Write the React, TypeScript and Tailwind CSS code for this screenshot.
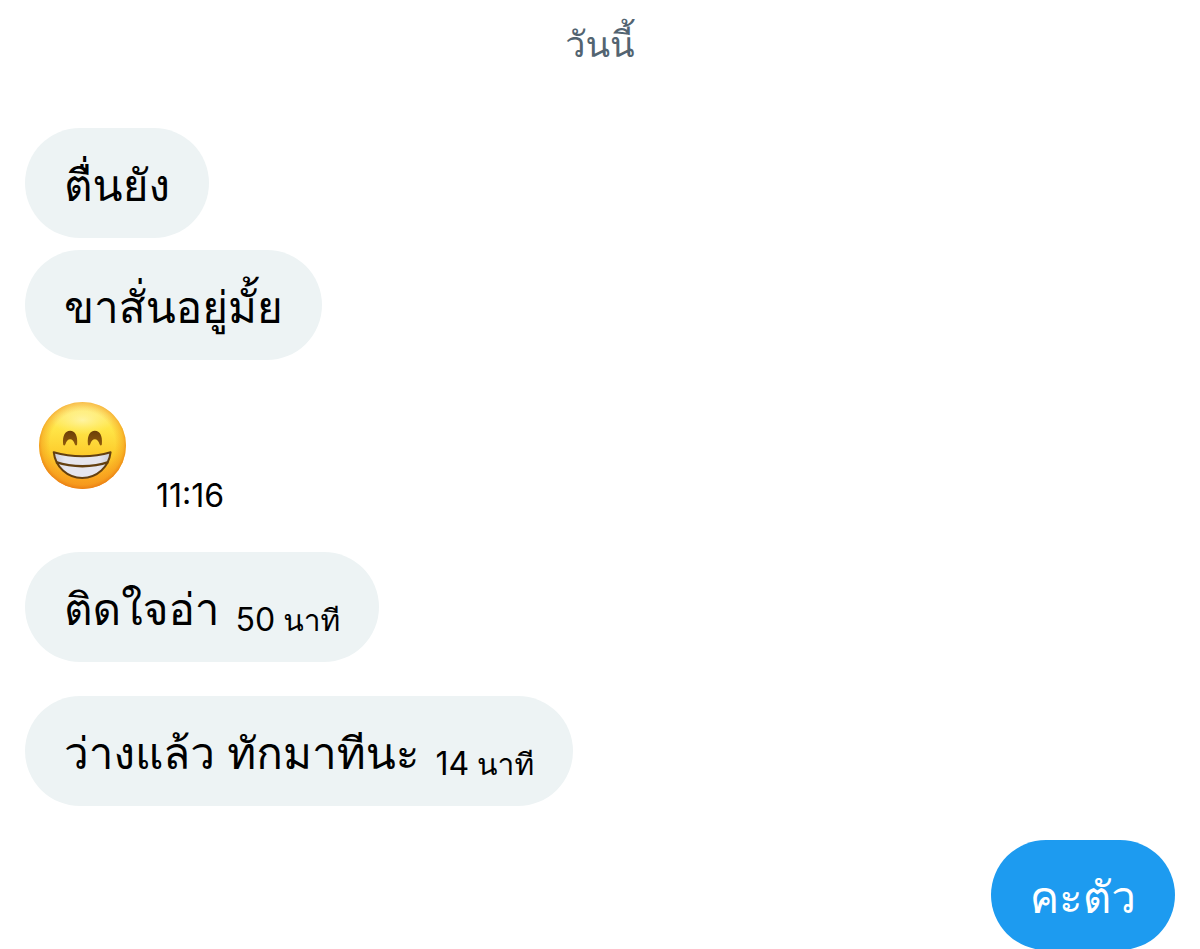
import type { ReactNode } from "react";

type BubbleProps = { children: ReactNode; minutes?: number; own?: boolean };

function Bubble({ children, minutes, own = false }: BubbleProps) {
  return (
    <div
      className={
        own
          ? "flex h-[110px] items-center self-end rounded-full bg-[#1d9bf0] px-[39px] text-white"
          : "flex h-[110px] items-center self-start rounded-full bg-[#edf3f4] px-[39px] text-black"
      }
    >
      <p className="flex items-end gap-4 pt-1 leading-[64px] whitespace-nowrap">
        <span className="text-[44px]">{children}</span>
        {minutes !== undefined && (
          <time className="flex items-baseline gap-2 leading-[42px]">
            <span className="text-[32px]">{minutes}</span>
            <span className="text-[30px]">นาที</span>
          </time>
        )}
      </p>
    </div>
  );
}

function GrinEmoji() {
  return (
    <svg viewBox="117 64 260 260" className="size-[87px]" role="img" aria-label="😁">
      <defs>
        <linearGradient id="face" x1="0" y1="0" x2="0" y2="1">
          <stop offset="0" stopColor="#fff08c" />
          <stop offset="0.3" stopColor="#ffe648" />
          <stop offset="0.6" stopColor="#fdcc2c" />
          <stop offset="1" stopColor="#f9961c" />
        </linearGradient>
        <radialGradient id="rim" cx="0.5" cy="0.48" r="0.52">
          <stop offset="0.72" stopColor="#f59a1c" stopOpacity="0" />
          <stop offset="0.9" stopColor="#f3981c" stopOpacity="0.5" />
          <stop offset="1" stopColor="#e87a12" stopOpacity="0.9" />
        </radialGradient>
        <radialGradient id="shine" cx="0.5" cy="0.5" r="0.5">
          <stop offset="0" stopColor="#fffbd0" stopOpacity="0.6" />
          <stop offset="1" stopColor="#fff6a0" stopOpacity="0" />
        </radialGradient>
        <linearGradient id="eye" x1="0" y1="0" x2="0" y2="1">
          <stop offset="0" stopColor="#6b3f08" />
          <stop offset="1" stopColor="#8f5a0c" />
        </linearGradient>
        <linearGradient id="teeth" x1="0" y1="0" x2="1" y2="0">
          <stop offset="0" stopColor="#c9cad4" />
          <stop offset="0.2" stopColor="#e6e6ee" />
          <stop offset="0.8" stopColor="#e6e6ee" />
          <stop offset="1" stopColor="#c9cad4" />
        </linearGradient>
      </defs>
      <circle cx="247" cy="194" r="130" fill="url(#face)" />
      <circle cx="247" cy="194" r="130" fill="url(#rim)" />
      <ellipse cx="247" cy="118" rx="92" ry="44" fill="url(#shine)" />
      <path d="M189 189C187 165 195 150 210 150s23 15 21 39c0 6-5 6-7 1-3-10-8-15-14-15s-11 5-14 15c-2 5-7 5-7-1Z" fill="url(#eye)" />
      <path d="M263 189c-2-24 6-39 21-39s23 15 21 39c0 6-5 6-7 1-3-10-8-15-14-15s-11 5-14 15c-2 5-7 5-7-1Z" fill="url(#eye)" />
      <path d="M161 214c54 16 118 16 170 0-5 44-40 77-85 77s-80-33-85-77Z" fill="url(#teeth)" stroke="#64400f" strokeWidth="6" strokeLinejoin="round" />
      <path d="M168 244c48 16 110 16 156 0" fill="none" stroke="#64400f" strokeWidth="7" />
    </svg>
  );
}

export default function App() {
  return (
    <main className="flex flex-col bg-white px-[25px] font-['Inter','Loma',sans-serif]">
      <h1 className="mt-2 self-center text-[36px] leading-[72px] font-normal text-[#536471]">วันนี้</h1>
      <section className="mt-12 flex flex-col gap-3">
        <Bubble>ตื่นยัง</Bubble>
        <Bubble>ขาสั่นอยู่มั้ย</Bubble>
      </section>
      <div className="mt-[42px] flex h-[116px] items-start gap-[30px] pl-[14px]">
        <GrinEmoji />
        <time className="self-end text-[32px] leading-[44px]">11:16</time>
      </div>
      <section className="mt-[34px] flex flex-col gap-[34px]">
        <Bubble minutes={50}>ติดใจอ่า</Bubble>
        <Bubble minutes={14}>ว่างแล้ว ทักมาทีนะ</Bubble>
        <Bubble own>คะตัว</Bubble>
      </section>
    </main>
  );
}
